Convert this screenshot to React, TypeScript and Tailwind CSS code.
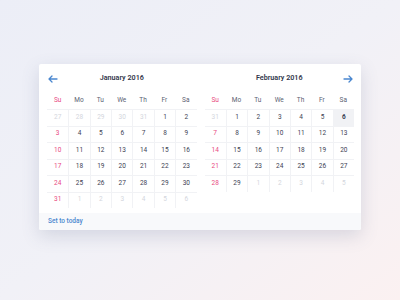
import React from 'react';

type Day = { n: number; muted?: boolean; active?: boolean };

const DAY_NAMES = ['Su', 'Mo', 'Tu', 'We', 'Th', 'Fr', 'Sa'];

const buildMonth = (leading: number[], count: number, trailing: number): Day[] => {
  const days: Day[] = leading.map((n) => ({ n, muted: true }));
  for (let i = 1; i <= count; i++) days.push({ n: i });
  for (let i = 1; i <= trailing; i++) days.push({ n: i, muted: true });
  return days;
};

const january = buildMonth([27, 28, 29, 30, 31], 31, 6);
const february = buildMonth([31], 29, 5).map((d) => (!d.muted && d.n === 6 ? { ...d, active: true } : d));

const ArrowLeft = () => (
  <svg width="10" height="8" viewBox="0 0 10 8" fill="none" stroke="#4a87cf" strokeWidth="1.3" strokeLinecap="round" strokeLinejoin="round">
    <path d="M9 4H1.5M4 1L1 4l3 3" />
  </svg>
);

const ArrowRight = () => (
  <svg width="10" height="8" viewBox="0 0 10 8" fill="none" stroke="#4a87cf" strokeWidth="1.3" strokeLinecap="round" strokeLinejoin="round">
    <path d="M1 4h7.5M6 1l3 3-3 3" />
  </svg>
);

const Month = ({ title, days, side }: { title: string; days: Day[]; side: 'left' | 'right' }) => {
  const rows: Day[][] = [];
  for (let i = 0; i < days.length; i += 7) rows.push(days.slice(i, i + 7));

  return (
    <div className="flex flex-col">
      {/* header */}
      <div className="h-[29px] flex items-center justify-between px-[1px]">
        {side === 'left' ? <ArrowLeft /> : <span className="w-[10px]" />}
        <span className="text-[7.2px] font-semibold text-[#2f3549]">{title}</span>
        {side === 'right' ? <ArrowRight /> : <span className="w-[10px]" />}
      </div>

      {/* weekday names */}
      <div className="grid grid-cols-7 h-[16px] items-center">
        {DAY_NAMES.map((d, i) => (
          <span key={d} className={`text-center text-[6.5px] ${i === 0 ? 'text-[#e84a7f]' : 'text-[#5b6172]'}`}>
            {d}
          </span>
        ))}
      </div>

      {/* days */}
      <div className="flex flex-col">
        {rows.map((row, r) => (
          <div key={r} className="grid grid-cols-7 h-[16.5px] border-t border-[#f1f2f5]">
            {row.map((d, i) => (
              <div
                key={i}
                className={`flex items-center justify-center text-[6.5px] ${i > 0 ? 'border-l border-[#f1f2f5]' : ''} ${
                  d.active ? 'bg-[#f1f2f5] font-bold text-[#3a4052]' : ''
                } ${d.muted ? 'text-[#d3d6dd]' : i === 0 ? 'text-[#e84a7f]' : d.active ? '' : 'text-[#3d4253]'}`}
              >
                {d.n}
              </div>
            ))}
          </div>
        ))}
      </div>
    </div>
  );
};

export default function App() {
  return (
    <div
      className="w-[400px] h-[300px] pt-[64px] pl-[39px] bg-gradient-to-br from-[#eceef7] via-[#f1f1f7] to-[#fbf1f1]"
      style={{ fontFamily: 'Roboto, "Noto Sans", sans-serif' }}
    >
      <div className="w-[322px] h-[166px] bg-white rounded-[2px] shadow-[0_6px_18px_rgba(80,90,130,0.18)] flex flex-col overflow-hidden">
        <div className="flex-1 grid grid-cols-2 gap-[8px] pl-[8px] pr-[7px]">
          <Month title="January 2016" days={january} side="left" />
          <Month title="February 2016" days={february} side="right" />
        </div>
        <div className="h-[17px] bg-[#f8f9fb] flex items-center px-[9px]">
          <span className="text-[6.5px] text-[#4a87cf] font-medium">Set to today</span>
        </div>
      </div>
    </div>
  );
}
